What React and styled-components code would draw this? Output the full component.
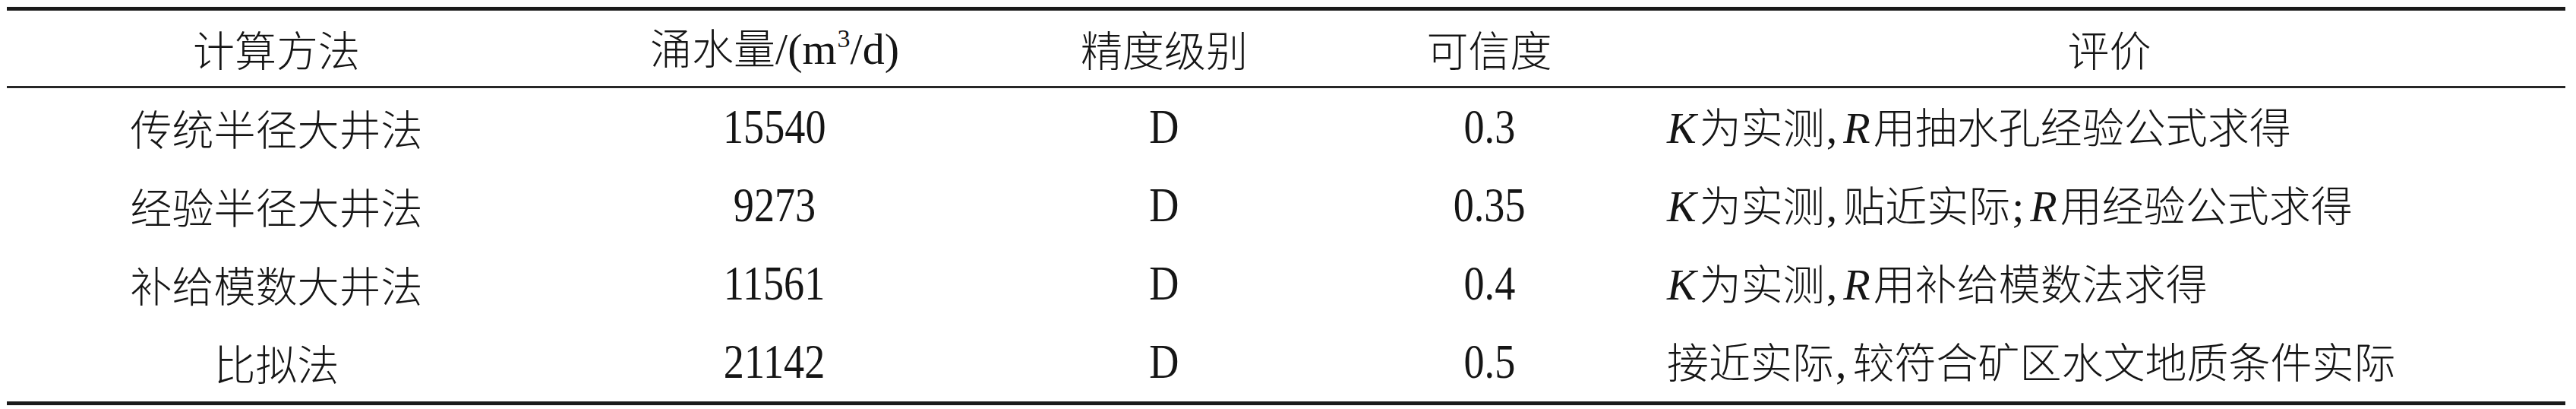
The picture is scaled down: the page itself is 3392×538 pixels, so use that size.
import styled, { createGlobalStyle } from "styled-components";

const GlobalStyle = createGlobalStyle`
  html, body {
    margin: 0;
    padding: 0;
    background: #ffffff;
  }
  body {
    font-family: "Noto Sans CJK SC", sans-serif;
    color: #151515;
  }
`;

const COLUMNS = "710px 602px 424px 432px 1201px";

const Table = styled.div`
  margin: 9px 0 0 9px;
  width: 3369px;
  border-top: 5px solid #1a1a1a;
  border-bottom: 5px solid #1a1a1a;
`;

const Row = styled.div`
  display: grid;
  grid-template-columns: ${COLUMNS};
  box-sizing: border-box;
  height: ${(props) => (props.$head ? 102 : 103)}px;
  border-bottom: ${(props) => (props.$head ? "3px solid #262626" : "none")};
`;

const Cell = styled.div`
  display: flex;
  align-items: center;
  justify-content: ${(props) => (props.$left ? "flex-start" : "center")};
  padding-left: ${(props) => (props.$left ? 18 : 0)}px;
  font-family: "Noto Sans CJK SC", sans-serif;
  font-weight: 300;
  font-size: 55px;
  line-height: 1;
  white-space: nowrap;
`;

// keeps mixed text in one inline run so baselines and superscripts work
const Text = styled.span`
  display: inline-block;
  line-height: 1;
`;

const Latin = styled.span`
  font-family: "Liberation Serif", "Times New Roman", serif;
  font-size: 58px;
  font-weight: 400;
  font-style: ${(props) => (props.$italic ? "italic" : "normal")};
  margin-right: ${(props) => (props.$italic ? 4 : 0)}px;
`;

const Punct = styled.span`
  font-family: "Liberation Serif", "Times New Roman", serif;
  font-size: 58px;
  margin: 0 8px 0 2px;
`;

// numbers in the reference are set in a tall, narrow serif
const Num = styled.span`
  display: inline-block;
  font-family: "Liberation Serif", "Times New Roman", serif;
  font-size: 63px;
  transform: scaleX(0.86);
`;

const Sup = styled.sup`
  font-family: "Liberation Serif", serif;
  font-size: 34px;
  vertical-align: 22px;
  line-height: 0;
  margin-left: 1px;
`;

const rows = [
  {
    method: "传统半径大井法",
    flow: "15540",
    level: "D",
    trust: "0.3",
    note: (
      <>
        <Latin $italic>K</Latin>为实测<Punct>,</Punct>
        <Latin $italic>R</Latin>用抽水孔经验公式求得
      </>
    ),
  },
  {
    method: "经验半径大井法",
    flow: "9273",
    level: "D",
    trust: "0.35",
    note: (
      <>
        <Latin $italic>K</Latin>为实测<Punct>,</Punct>贴近实际<Punct>;</Punct>
        <Latin $italic>R</Latin>用经验公式求得
      </>
    ),
  },
  {
    method: "补给模数大井法",
    flow: "11561",
    level: "D",
    trust: "0.4",
    note: (
      <>
        <Latin $italic>K</Latin>为实测<Punct>,</Punct>
        <Latin $italic>R</Latin>用补给模数法求得
      </>
    ),
  },
  {
    method: "比拟法",
    flow: "21142",
    level: "D",
    trust: "0.5",
    note: (
      <>
        接近实际<Punct>,</Punct>较符合矿区水文地质条件实际
      </>
    ),
  },
];

export default function App() {
  return (
    <>
      <GlobalStyle />
      <Table>
        <Row $head>
          <Cell>计算方法</Cell>
          <Cell>
            <Text>
              涌水量<Latin>/(m</Latin>
              <Sup>3</Sup>
              <Latin>/d)</Latin>
            </Text>
          </Cell>
          <Cell>精度级别</Cell>
          <Cell>可信度</Cell>
          <Cell>评价</Cell>
        </Row>
        {rows.map((r) => (
          <Row key={r.method}>
            <Cell>{r.method}</Cell>
            <Cell>
              <Num>{r.flow}</Num>
            </Cell>
            <Cell>
              <Num>{r.level}</Num>
            </Cell>
            <Cell>
              <Num>{r.trust}</Num>
            </Cell>
            <Cell $left>
              <Text>{r.note}</Text>
            </Cell>
          </Row>
        ))}
      </Table>
    </>
  );
}
